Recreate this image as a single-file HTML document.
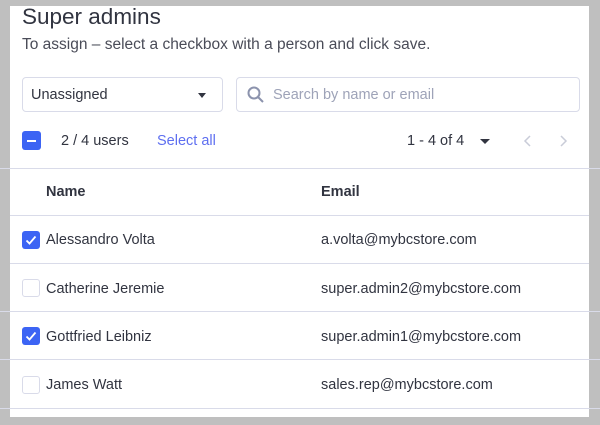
<!DOCTYPE html>
<html><head><style>
body{margin:0;width:600px;height:425px;background:#bfbfbf;position:relative;overflow:hidden;font-family:"Liberation Sans",sans-serif;color:#313440}
.p{position:absolute;left:10px;top:6px;width:579px;height:411px;background:#fff}
.a{position:absolute;white-space:nowrap}
.l{position:absolute;left:0;width:600px;height:1px;background:#d9dbe9}
.cb{position:absolute;left:22px;width:18px;height:18px;border-radius:3px;box-sizing:border-box}
.on{background:#3c64f4}
.off{border:1px solid #d9dbe9;background:#fff}
.r{font-size:14.5px;color:#313440}
</style></head><body>
<div class="l" style="top:168px"></div>
<div class="p"></div>
<div class="l" style="top:168px;left:10px;width:579px"></div>
<div class="l" style="top:215px;left:10px;width:579px"></div>
<div class="l" style="top:263px;left:10px;width:579px"></div>
<div class="l" style="top:311px"></div>
<div class="l" style="top:359px"></div>
<div class="l" style="top:408px"></div>
<div class="a" style="left:22px;top:4px;font-size:22.5px">Super admins</div>
<div class="a" style="left:22px;top:36px;font-size:15.5px;color:#4a4c58">To assign – select a checkbox with a person and click save.</div>
<div class="a" style="left:22px;top:77px;width:201px;height:35px;border:1px solid #d9dbe9;border-radius:4px;box-sizing:border-box"></div>
<div class="a" style="left:31px;top:87px;font-size:14.5px">Unassigned</div>
<div class="a" style="left:198px;top:93px;width:0;height:0;border-left:4px solid transparent;border-right:4px solid transparent;border-top:5px solid #313440"></div>
<div class="a" style="left:236px;top:77px;width:344px;height:35px;border:1px solid #d9dbe9;border-radius:4px;box-sizing:border-box"></div>
<svg class="a" style="left:246px;top:85px" width="20" height="20" viewBox="0 0 20 20"><circle cx="8" cy="8" r="5.5" fill="none" stroke="#8c93ad" stroke-width="2"/><path d="M12 12l5 5" stroke="#8c93ad" stroke-width="2"/></svg>
<div class="a" style="left:273px;top:87px;font-size:14.5px;color:#9ea3b8">Search by name or email</div>
<div class="cb on" style="top:131px;width:19px;height:19px"><div style="position:absolute;left:5px;top:8.5px;width:9px;height:2px;background:#fff"></div></div>
<div class="a r" style="left:61px;top:133px">2 / 4 users</div>
<div class="a" style="left:157px;top:133px;font-size:14.5px;color:#5e6ff0">Select all</div>
<div class="a r" style="left:407px;top:133px">1 - 4 of 4</div>
<div class="a" style="left:480px;top:139px;width:0;height:0;border-left:5px solid transparent;border-right:5px solid transparent;border-top:5px solid #313440"></div>
<svg class="a" style="left:520px;top:133px" width="60" height="16"><path d="M10 3l-5 5 5 5" fill="none" stroke="#c9ccd8" stroke-width="1.5"/><path d="M41 3l5 5-5 5" fill="none" stroke="#c9ccd8" stroke-width="1.5"/></svg>
<div class="a" style="left:46px;top:184px;font-size:14.5px;font-weight:bold">Name</div>
<div class="a" style="left:321px;top:184px;font-size:14.5px;font-weight:bold">Email</div>

<div class="cb on" style="top:231px"><svg width="18" height="18"><path d="M4.5 9.5l3 3 6-7" fill="none" stroke="#fff" stroke-width="1.8"/></svg></div>
<div class="a r" style="left:46px;top:232px">Alessandro Volta</div>
<div class="a r" style="left:321px;top:232px">a.volta@mybcstore.com</div>

<div class="cb off" style="top:279px"></div>
<div class="a r" style="left:46px;top:281px">Catherine Jeremie</div>
<div class="a r" style="left:321px;top:281px">super.admin2@mybcstore.com</div>

<div class="cb on" style="top:327px"><svg width="18" height="18"><path d="M4.5 9.5l3 3 6-7" fill="none" stroke="#fff" stroke-width="1.8"/></svg></div>
<div class="a r" style="left:46px;top:329px">Gottfried Leibniz</div>
<div class="a r" style="left:321px;top:329px">super.admin1@mybcstore.com</div>

<div class="cb off" style="top:376px"></div>
<div class="a r" style="left:46px;top:377px">James Watt</div>
<div class="a r" style="left:321px;top:377px">sales.rep@mybcstore.com</div>
</body></html>
